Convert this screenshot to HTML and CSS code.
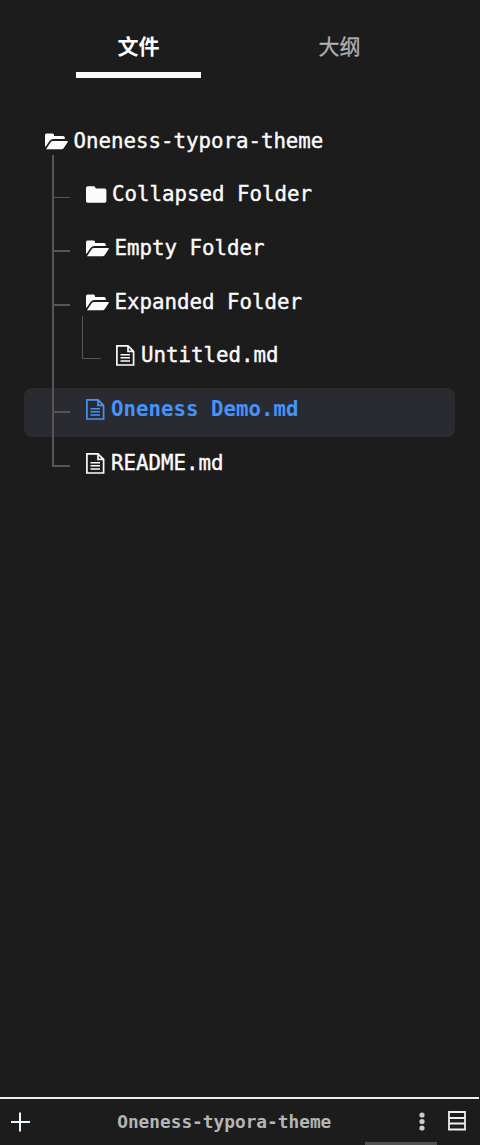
FILE: index.html
```html
<!DOCTYPE html>
<html lang="zh-CN">
<head>
<meta charset="utf-8">
<title>Oneness-typora-theme</title>
<link rel="stylesheet" href="styles.css">
</head>
<body>
<svg class="symbols" aria-hidden="true">
  <symbol id="folder-open" viewBox="0 0 23 17">
    <path fill="currentColor" d="M0 13.5V2Q0 .5 1.5 .5H7.5Q9 .5 9 2V3H18Q19.8 3 19.8 4.8V6H8.5Q6 6 4.5 8L.8 13.5ZM1 16.2L5.5 9.4Q6.4 8 8 8H22.2Q23.3 8 22.7 9L18.8 15Q18 16.2 16.6 16.2Z"/>
  </symbol>
  <symbol id="folder" viewBox="0 0 21 17">
    <path fill="currentColor" d="M0 15V2Q0 .3 1.7 .3H7.5Q9.3 .3 9.8 2.4H18.8Q20.4 2.4 20.4 4V15Q20.4 16.7 18.8 16.7H1.7Q0 16.7 0 15Z"/>
  </symbol>
  <symbol id="file" viewBox="0 0 19 21">
    <path fill="none" stroke="currentColor" stroke-width="1.7" d="M.9 .9H12L17.6 6.3V20H.9ZM12 .9V6.3H17.6"/>
    <path fill="none" stroke="currentColor" stroke-width="1.5" d="M4.5 9.7H14M4.5 12.8H14M4.5 15.9H14"/>
  </symbol>
</svg>
<div class="sidebar">
  <nav class="tabs">
    <div class="tab active">文件</div>
    <div class="tab">大纲</div>
  </nav>
  <main class="tree">
    <div class="row root"><svg class="icon-open"><use href="#folder-open"/></svg><span>Oneness-typora-theme</span></div>
    <div class="children">
      <div class="row thin"><svg class="icon-folder"><use href="#folder"/></svg><span>Collapsed Folder</span></div>
      <div class="row"><svg class="icon-open"><use href="#folder-open"/></svg><span>Empty Folder</span></div>
      <div class="row"><svg class="icon-open"><use href="#folder-open"/></svg><span>Expanded Folder</span></div>
      <div class="row nested"><svg class="icon-file"><use href="#file"/></svg><span>Untitled.md</span></div>
      <div class="row selected"><svg class="icon-file"><use href="#file"/></svg><span>Oneness Demo.md</span></div>
      <div class="row"><svg class="icon-file"><use href="#file"/></svg><span>README.md</span></div>
    </div>
  </main>
  <footer class="footer">
    <svg class="add" viewBox="0 0 20 20"><path d="M0 10H19M9 .5V19.5"/></svg>
    <span class="name">Oneness-typora-theme</span>
    <svg class="more" viewBox="0 0 6 19"><circle cx="3" cy="3" r="2.6"/><circle cx="3" cy="9.5" r="2.6"/><circle cx="3" cy="16" r="2.6"/></svg>
    <svg class="list" viewBox="0 0 18 20"><path d="M1 1H17V18.5H1ZM1 7H17M1 12.5H17"/></svg>
    <div class="handle"></div>
  </footer>
</div>
</body>
</html>
```
FILE: styles.css
```css
* { box-sizing: border-box; }
body {
  margin: 0;
  background: #1c1c1c;
  color: #fbfbfb;
  font-family: "DejaVu Sans Mono", "Noto Sans CJK SC", monospace;
}
.symbols { position: absolute; width: 0; height: 0; }
.sidebar { display: flex; flex-direction: column; height: 1145px; }
.tabs { display: flex; gap: 76px; padding: 15px 0 0 76px; height: 119.7px; }
.tab {
  width: 125px;
  height: 63px;
  border-bottom: 6px solid transparent;
  font: 400 21px/60px "Noto Sans CJK SC", sans-serif;
  text-align: center;
  color: #b0b0b0;
  -webkit-text-stroke: 0.3px currentColor;
}
.tab.active { color: #fff; font-weight: 700; border-color: #fbfbfb; -webkit-text-stroke: 0; }
.tree { flex: 1; padding: 0 25px 0 24px; }
.row {
  position: relative;
  display: flex;
  align-items: center;
  height: 49px;
  margin-bottom: 4.67px;
  padding-left: 62px;
  font-size: 20.76px;
  line-height: 49px;
  white-space: pre;
  -webkit-text-stroke: 0.4px currentColor;
}
.row span { position: relative; top: -3px; }
.row svg { flex: none; position: relative; top: -3px; }
.root { padding-left: 21px; }
.icon-open { width: 23px; height: 17px; margin-right: 5.5px; }
.icon-folder { width: 21px; height: 17px; margin-right: 5px; }
.icon-file { width: 19px; height: 21px; margin-right: 6px; }
.children { position: relative; }
.children::before {
  content: "";
  position: absolute;
  z-index: 1;
  left: 28px;
  top: -18.5px;
  width: 2px;
  height: 312px;
  background: #555;
}
.children .row::before {
  content: "";
  position: absolute;
  left: 28px;
  top: 23px;
  width: 18px;
  height: 2px;
  background: #555;
}
.children .thin::before { top: 24px; height: 1px; }
.children .nested { padding-left: 92px; }
.children .nested::before {
  left: 58px;
  top: -18px;
  height: 42px;
  background: none;
  border: solid #555;
  border-width: 0 0 1px 1px;
}
.selected {
  border-radius: 8px;
  background: #2a2b31;
  color: #4593fa;
  font-weight: 700;
  -webkit-text-stroke: 0;
}
.footer {
  position: relative;
  display: flex;
  align-items: center;
  width: 479px;
  height: 48px;
  padding-left: 11px;
  border-top: 2px solid #eee;
}
.add { width: 20px; height: 20px; fill: none; stroke: #e8f7ff; stroke-width: 2; }
.name {
  width: 215px;
  margin-left: 86.2px;
  font-size: 17.8px;
  font-weight: 700;
  line-height: 44px;
  color: #b5b5b5;
  white-space: nowrap;
}
.more { width: 6px; height: 19px; margin: -2px 0 0 86.8px; fill: #ccc; }
.list { width: 18px; height: 20px; margin: -3px 0 0 23px; fill: none; stroke: #eee; stroke-width: 1.8; }
.handle { position: absolute; left: 365px; bottom: 0; width: 72px; height: 3px; background: #505050; }
```
